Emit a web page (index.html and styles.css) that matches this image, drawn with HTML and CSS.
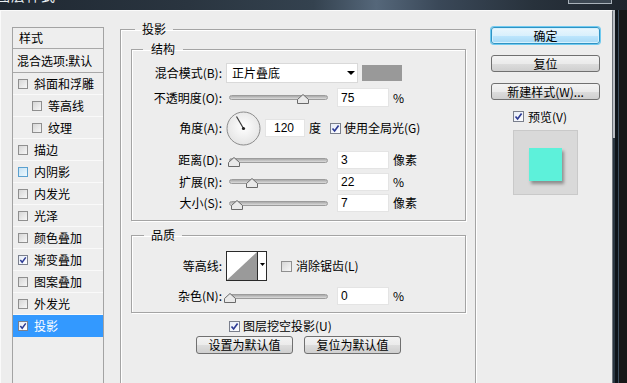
FILE: index.html
```html
<!DOCTYPE html>
<html lang="zh-CN">
<head>
<meta charset="utf-8">
<title>图层样式</title>
<link rel="stylesheet" href="styles.css">
</head>
<body>
<div class="screen">
  <div class="titlebar">
    <span class="title">图层样式</span>
    <span class="close"></span>
  </div>
  <div class="main-row">
    <div class="dialog">
      <ul class="styles-list">
        <li class="head head-1">样式</li>
        <li class="head head-2">混合选项:默认</li>
        <li><span class="cb"></span>斜面和浮雕</li>
        <li class="sub"><span class="cb"></span>等高线</li>
        <li class="sub"><span class="cb"></span>纹理</li>
        <li><span class="cb"></span>描边</li>
        <li><span class="cb hover"></span>内阴影</li>
        <li><span class="cb"></span>内发光</li>
        <li><span class="cb"></span>光泽</li>
        <li><span class="cb"></span>颜色叠加</li>
        <li><span class="cb checked"><svg viewBox="0 0 9 9"><path d="M1.5 4.5 L3.6 7 L7.6 1.6"/></svg></span>渐变叠加</li>
        <li><span class="cb"></span>图案叠加</li>
        <li><span class="cb"></span>外发光</li>
        <li class="selected"><span class="cb checked"><svg viewBox="0 0 9 9"><path d="M1.5 4.5 L3.6 7 L7.6 1.6"/></svg></span>投影</li>
      </ul>

      <fieldset class="group outer">
        <legend>投影</legend>

        <fieldset class="group inner struct">
          <legend>结构</legend>

          <div class="row r-mode">
            <span class="label">混合模式(B):</span>
            <div class="select"><span>正片叠底</span><span class="arrow"></span></div>
            <span class="swatch"></span>
          </div>

          <div class="row r-opacity">
            <span class="label">不透明度(O):</span>
            <div class="slider"><span class="thumb" style="left:75%"><svg viewBox="0 0 12 10"><polygon points="6,0.5 11.5,5.5 11.5,9.5 0.5,9.5 0.5,5.5"/></svg></span></div>
            <input class="field tall" type="text" value="75" readonly>
            <span class="unit">%</span>
          </div>

          <div class="row r-angle">
            <span class="label">角度(A):</span>
            <svg class="dial" viewBox="0 0 35 35">
              <defs>
                <radialGradient id="dg" cx="0.5" cy="0.45" r="0.6">
                  <stop offset="0" stop-color="#ffffff"/>
                  <stop offset="1" stop-color="#e2e2e2"/>
                </radialGradient>
              </defs>
              <circle cx="17.5" cy="17.5" r="16.5" fill="url(#dg)" stroke="#8c8c8c" stroke-width="1"/>
              <line x1="17.5" y1="17.5" x2="10.5" y2="5.5" stroke="#3a3a3a" stroke-width="1.2"/>
              <circle cx="17.5" cy="17.5" r="1.6" fill="#222"/>
            </svg>
            <input class="field short" type="text" value="120" readonly>
            <span class="unit">度</span>
            <span class="cb checked global"><svg viewBox="0 0 9 9"><path d="M1.5 4.5 L3.6 7 L7.6 1.6"/></svg></span>
            <span class="cb-text">使用全局光(G)</span>
          </div>

          <div class="row r-dist">
            <span class="label">距离(D):</span>
            <div class="slider"><span class="thumb" style="left:4%"><svg viewBox="0 0 12 10"><polygon points="6,0.5 11.5,5.5 11.5,9.5 0.5,9.5 0.5,5.5"/></svg></span></div>
            <input class="field" type="text" value="3" readonly>
            <span class="unit">像素</span>
          </div>

          <div class="row r-spread">
            <span class="label">扩展(R):</span>
            <div class="slider"><span class="thumb" style="left:23%"><svg viewBox="0 0 12 10"><polygon points="6,0.5 11.5,5.5 11.5,9.5 0.5,9.5 0.5,5.5"/></svg></span></div>
            <input class="field" type="text" value="22" readonly>
            <span class="unit">%</span>
          </div>

          <div class="row r-size">
            <span class="label">大小(S):</span>
            <div class="slider"><span class="thumb" style="left:7%"><svg viewBox="0 0 12 10"><polygon points="6,0.5 11.5,5.5 11.5,9.5 0.5,9.5 0.5,5.5"/></svg></span></div>
            <input class="field" type="text" value="7" readonly>
            <span class="unit">像素</span>
          </div>
        </fieldset>

        <fieldset class="group inner quality">
          <legend>品质</legend>

          <div class="row r-contour">
            <span class="label">等高线:</span>
            <svg class="contour" viewBox="0 0 41 30">
              <rect x="0.5" y="0.5" width="40" height="29" fill="#ffffff" stroke="#2a2a2a"/>
              <polygon points="1,29 31,1 31,29" fill="#9a9a9a"/>
              <line x1="31.5" y1="0.5" x2="31.5" y2="29.5" stroke="#2a2a2a"/>
              <polygon points="34,12 39,12 36.5,15" fill="#000"/>
            </svg>
            <span class="cb aa"></span>
            <span class="cb-text aa-text">消除锯齿(L)</span>
          </div>

          <div class="row r-noise">
            <span class="label">杂色(N):</span>
            <div class="slider"><span class="thumb" style="left:0%"><svg viewBox="0 0 12 10"><polygon points="6,0.5 11.5,5.5 11.5,9.5 0.5,9.5 0.5,5.5"/></svg></span></div>
            <input class="field" type="text" value="0" readonly>
            <span class="unit">%</span>
          </div>
        </fieldset>

        <div class="knockout">
          <span class="cb checked"><svg viewBox="0 0 9 9"><path d="M1.5 4.5 L3.6 7 L7.6 1.6"/></svg></span>
          <span class="cb-text">图层挖空投影(U)</span>
        </div>

        <div class="defaults">
          <button class="btn wide">设置为默认值</button>
          <button class="btn wide">复位为默认值</button>
        </div>
      </fieldset>

      <div class="side">
        <button class="btn primary">确定</button>
        <button class="btn">复位</button>
        <button class="btn">新建样式(W)...</button>
        <div class="preview-check">
          <span class="cb checked"><svg viewBox="0 0 9 9"><path d="M1.5 4.5 L3.6 7 L7.6 1.6"/></svg></span>
          <span class="cb-text">预览(V)</span>
        </div>
        <div class="preview-box"><span class="preview-square"></span></div>
      </div>
    </div>
    <div class="edge"><div class="edge-top"></div></div>
  </div>
</div>
</body>
</html>
```

FILE: styles.css
```css
* { box-sizing: border-box; }

html, body {
  margin: 0;
  padding: 0;
}

body {
  width: 627px;
  height: 383px;
  overflow: hidden;
  background: #161616;
  font-family: "Noto Sans CJK SC", "Liberation Sans", sans-serif;
  font-size: 12px;
  line-height: 14px;
  color: #000;
}

.screen {
  display: flex;
  flex-direction: column;
  width: 627px;
  height: 383px;
}

/* ---------- title bar ---------- */
.titlebar {
  height: 10px;
  flex: none;
  display: flex;
  justify-content: space-between;
  align-items: flex-start;
  overflow: hidden;
  background: linear-gradient(90deg, #1f2832 0%, #2a3540 30%, #34424f 50%, #55677a 60%, #3a4858 70%, #28323c 85%, #1e252d 100%);
}

.title {
  color: #e8eef2;
  font-size: 14px;
  line-height: 16px;
  margin-top: -13px;
  margin-left: -4px;
  letter-spacing: 1px;
}

.close {
  width: 44px;
  height: 4px;
  margin-right: 15px;
  border: 1px solid #a9b2ba;
  border-top: none;
  background: #3d4853;
}

/* ---------- main ---------- */
.main-row {
  flex: 1;
  display: flex;
  min-height: 0;
}

.dialog {
  width: 613px;
  height: 373px;
  flex: none;
  overflow: hidden;
  background: #ededed;
  border-left: 1px solid #fafafa;
  border-top: 1px solid #fafafa;
  border-right: 1px solid #6f757c;
  display: flex;
  align-items: flex-start;
  padding: 16px 0 0 11px;
}

.edge {
  flex: 1;
  background: linear-gradient(90deg, #2a3742 0 2px, #0f151a 2px 5px, #3e5060 5px 6px, #171717 6px);
}

.edge-top {
  width: 2px;
  height: 128px;
  background: #b9bec4;
}

/* ---------- checkbox ---------- */
.cb {
  width: 11px;
  height: 11px;
  flex: none;
  border: 1px solid #8f8f8f;
  background: linear-gradient(135deg, #d6d6d6, #f7f7f7);
  display: inline-flex;
  align-items: center;
  justify-content: center;
}

.cb svg {
  width: 9px;
  height: 9px;
}

.cb svg path {
  fill: none;
  stroke: #2d3b94;
  stroke-width: 1.7;
}

.cb.checked {
  background: linear-gradient(135deg, #e6ecf7, #fdfdff);
  border-color: #7a7f8c;
}

.cb.hover {
  border-color: #5aa0cf;
  background: linear-gradient(135deg, #c6e2f4, #eef8fd);
}

/* ---------- style list ---------- */
.styles-list {
  list-style: none;
  margin: 0;
  padding: 0;
  width: 92px;
  height: 400px;
  flex: none;
  border: 1px solid #a3a3a3;
  border-bottom: none;
  background: #eeeeee;
}

.styles-list li {
  height: 22px;
  display: flex;
  align-items: center;
  padding-left: 5px;
  border-bottom: 1px solid #f9f9f9;
  white-space: nowrap;
}

.styles-list li .cb {
  width: 10px;
  height: 10px;
  margin-right: 6px;
}

.styles-list li .cb svg {
  width: 8px;
  height: 8px;
}

.styles-list li.sub {
  padding-left: 19px;
}

.styles-list li.head {
  border-bottom: 1px solid #a8a8a8;
}

.styles-list li.head-1 {
  height: 21px;
  padding-left: 6px;
}

.styles-list li.head-2 {
  height: 24px;
  padding-left: 4px;
}

.styles-list li.selected {
  background: #3399ff;
  color: #fff;
  border-bottom-color: #3399ff;
}

/* ---------- group boxes ---------- */
.group {
  margin: 0;
  min-width: 0;
  border: 1px solid #a4a4a4;
  box-shadow: inset 1px 1px 0 #ffffff, 1px 1px 0 #ffffff;
}

.group > legend {
  line-height: 14px;
  height: 14px;
}

.outer {
  width: 356px;
  height: 400px;
  margin-left: 16px;
  margin-top: -5px;
  padding: 6px 9px 0 10px;
  flex: none;
}

.outer > legend {
  margin-left: 4px;
  padding: 0 7px;
}

.inner {
  width: 335px;
}

.inner > legend {
  padding: 0 8px;
}

.struct {
  padding: 6px 0 6px 0;
}

.struct > legend {
  margin-left: 11px;
}

.quality {
  margin-top: 7px;
  padding: 9px 0 7px 0;
}

.quality > legend {
  margin-left: 12px;
  padding: 0 7px;
}

/* ---------- rows ---------- */
.row {
  display: flex;
  align-items: center;
  white-space: nowrap;
}

.label {
  width: 90px;
  flex: none;
  text-align: right;
}

.r-mode { height: 22px; }
.r-opacity { height: 23px; margin-top: 2px; }
.r-angle { height: 34px; margin-top: 2px; }
.r-dist { height: 22px; margin-top: 4px; }
.r-spread { height: 21px; }
.r-size { height: 22px; }
.r-contour { height: 30px; }
.r-noise { height: 18px; margin-top: 6px; }

.select {
  margin-left: 4px;
  width: 132px;
  height: 20px;
  background: #fff;
  border: 1px solid #d9d9d9;
  display: flex;
  align-items: center;
  justify-content: space-between;
  padding: 0 2px 0 5px;
}

.arrow {
  width: 0;
  height: 0;
  border-left: 4px solid transparent;
  border-right: 4px solid transparent;
  border-top: 4px solid #000;
}

.swatch {
  margin-left: 4px;
  width: 40px;
  height: 16px;
  background: #999999;
}

.slider {
  position: relative;
  margin-left: 7px;
  width: 99px;
  height: 5px;
  flex: none;
  border: 1px solid #9c9c9c;
  border-radius: 3px;
  background: linear-gradient(#a9a9a9, #dcdcdc);
}

.thumb {
  position: absolute;
  top: -2px;
  width: 12px;
  height: 10px;
  margin-left: -6px;
  display: block;
}

.thumb svg {
  display: block;
  width: 12px;
  height: 10px;
}

.thumb polygon {
  fill: #e9e9e9;
  stroke: #6a6a6a;
  stroke-width: 1;
}

.field {
  margin: 0 0 0 9px;
  width: 52px;
  height: 18px;
  flex: none;
  padding: 0 0 0 3px;
  border: 1px solid #e4e4e4;
  background: #fff;
  font-family: "Liberation Sans", "Noto Sans CJK SC", sans-serif;
  font-size: 12px;
  color: #000;
  outline: none;
}

.field.tall {
  height: 19px;
}

.field.short {
  margin-left: 4px;
  width: 40px;
  padding-left: 8px;
}

.unit {
  margin-left: 4px;
}

.dial {
  margin-left: 4px;
  width: 35px;
  height: 35px;
  flex: none;
}

.cb.global {
  margin-left: 9px;
}

.cb-text {
  margin-left: 3px;
}

.contour {
  margin-left: 4px;
  width: 41px;
  height: 30px;
  flex: none;
}

.cb.aa {
  margin-left: 14px;
}

.aa-text {
  margin-left: 4px;
}

.knockout {
  display: flex;
  align-items: center;
  height: 14px;
  margin-top: 6px;
  margin-left: 98px;
}

.defaults {
  display: flex;
  justify-content: center;
  gap: 11px;
  margin-top: 3px;
}

/* ---------- buttons ---------- */
.btn {
  display: block;
  height: 17px;
  padding: 0;
  border: 1px solid #707070;
  border-radius: 3px;
  background: linear-gradient(#f3f3f3 0%, #ebebeb 50%, #dddddd 51%, #cfcfcf 100%);
  font-family: "Noto Sans CJK SC", "Liberation Sans", sans-serif;
  font-size: 12px;
  line-height: 14px;
  color: #000;
  text-align: center;
}

.btn.wide {
  width: 97px;
  height: 18px;
}

.side {
  margin-left: 15px;
  width: 109px;
  flex: none;
  display: flex;
  flex-direction: column;
}

.side .btn {
  width: 109px;
  margin-bottom: 11px;
}

.btn.primary {
  border-color: #2f93c4;
  box-shadow: 0 0 0 1px #6fcaf0, inset 0 0 0 1px #d6f1fd;
  background: linear-gradient(#eaf6fd 0%, #d9f0fc 50%, #bee6fd 51%, #a7d9f5 100%);
}

.preview-check {
  display: flex;
  align-items: center;
  height: 13px;
  margin-top: -1px;
  margin-left: 22px;
}

.preview-check .cb-text {
  margin-left: 4px;
}

.preview-box {
  margin-top: 7px;
  margin-left: 22px;
  width: 65px;
  height: 65px;
  background: #d9d9d9;
  border: 1px solid #c9c9c9;
  display: flex;
  align-items: center;
  justify-content: center;
}

.preview-square {
  width: 33px;
  height: 33px;
  margin-top: 4px;
  background: #5df1da;
  box-shadow: 2px 3px 3px rgba(0, 0, 0, 0.35);
}
```
